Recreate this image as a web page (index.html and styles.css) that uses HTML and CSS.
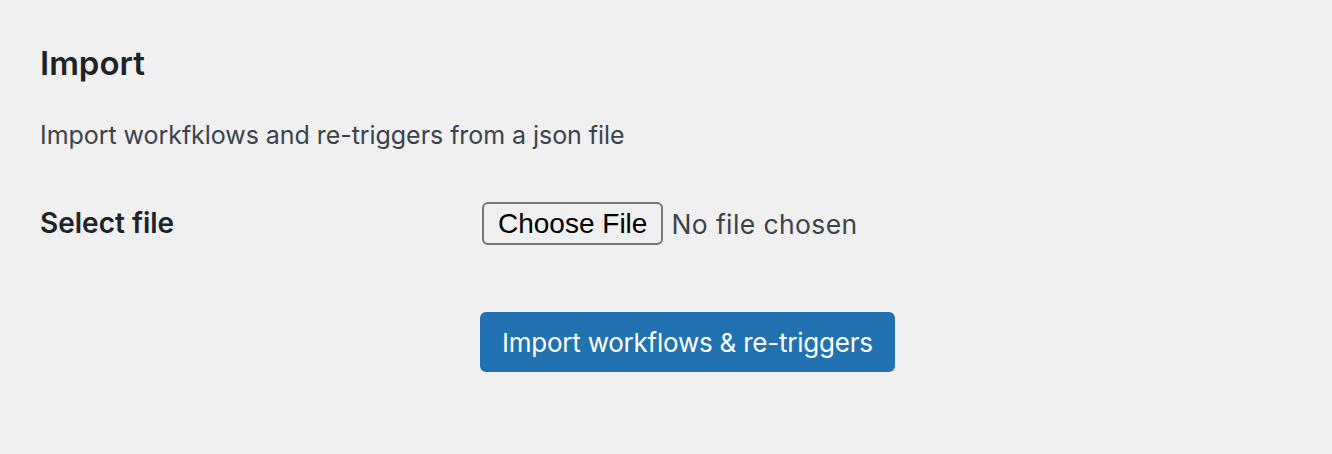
FILE: index.html
```html
<!DOCTYPE html>
<html lang="en">
<head>
<meta charset="utf-8">
<title>Import</title>
<link rel="stylesheet" href="styles.css">
</head>
<body>
<main class="wrap">
  <h2 class="title">Import</h2>
  <p class="desc">Import workfklows and re-triggers from a json file</p>
  <form class="form">
    <div class="row">
      <label class="label" for="file">Select file</label>
      <div class="field">
        <button type="button" class="file-btn" id="file">Choose File</button>
        <span class="file-name">No file chosen</span>
      </div>
    </div>
    <div class="row">
      <div></div>
      <div class="field">
        <button type="submit" class="primary">Import workflows &amp; re-triggers</button>
      </div>
    </div>
  </form>
</main>
</body>
</html>
```
FILE: styles.css
```css
html, body {
  margin: 0;
  padding: 0;
  background: #f0f0f1;
}
body {
  font-family: Inter, "Noto Sans", sans-serif;
  color: #3c434a;
}
.wrap {
  padding: 41px 40px 0 40px;
}
.title {
  margin: 0;
  font-size: 33px;
  font-weight: 600;
  line-height: 44px;
  color: #1d2327;
}
.desc {
  margin: 32px 0 0 0;
  font-size: 25px;
  letter-spacing: -0.05px;
  line-height: 36px;
  color: #3c434a;
}
.form {
  margin-top: 49px;
}
.row {
  display: grid;
  grid-template-columns: 440px 1fr;
  align-items: center;
}
.row + .row {
  margin-top: 67px;
}
.label {
  font-size: 28px;
  font-weight: 600;
  line-height: 43px;
  color: #1d2327;
}
.field {
  display: flex;
  align-items: center;
  gap: 8px;
}
.file-btn {
  margin: 0 0 0 2px;
  height: 43px;
  padding: 0 14px;
  font-family: "Liberation Sans", Arial, sans-serif;
  font-size: 28px;
  color: #000;
  background: #efefef;
  border: 2px solid #767676;
  border-radius: 6px;
}
.file-name {
  font-size: 26.5px;
  letter-spacing: 0.4px;
  color: #3c434a;
}
.primary {
  height: 60px;
  padding: 0 20px;
  font-family: Inter, "Noto Sans", sans-serif;
  font-size: 26px;
  letter-spacing: -0.23px;
  color: #fff;
  background: #2271b1;
  border: 2px solid #2271b1;
  border-radius: 6px;
}
```
